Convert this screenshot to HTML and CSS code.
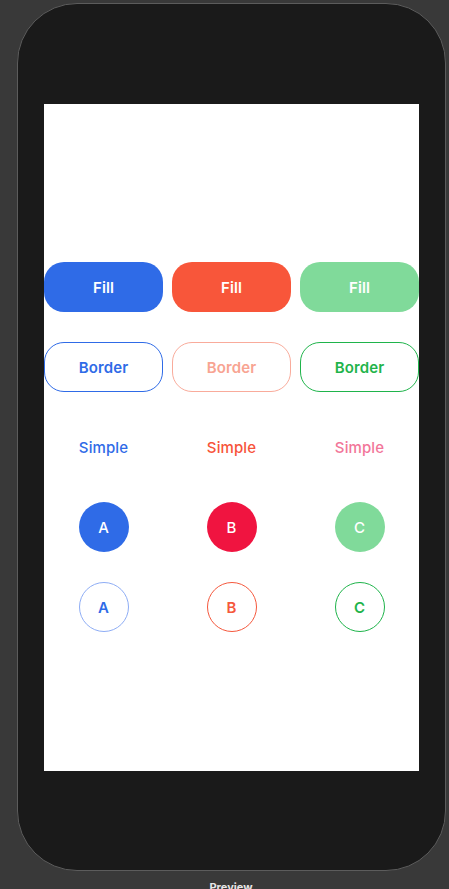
FILE: index.html
```html
<!DOCTYPE html>
<html>
<head>
<meta charset="utf-8">
<link rel="stylesheet" href="styles.css">
</head>
<body>
<div class="stage">
  <div class="phone">
    <div class="screen">
      <div class="grid">
        <div class="btn fill blue">Fill</div>
        <div class="btn fill red">Fill</div>
        <div class="btn fill green">Fill</div>

        <div class="btn border b-blue">Border</div>
        <div class="btn border b-salmon">Border</div>
        <div class="btn border b-green">Border</div>

        <div class="btn simple s-blue">Simple</div>
        <div class="btn simple s-red">Simple</div>
        <div class="btn simple s-pink">Simple</div>

        <div class="cell"><div class="circle c-blue">A</div></div>
        <div class="cell"><div class="circle c-crimson">B</div></div>
        <div class="cell"><div class="circle c-green">C</div></div>

        <div class="cell"><div class="circle o-blue">A</div></div>
        <div class="cell"><div class="circle o-red">B</div></div>
        <div class="cell"><div class="circle o-green">C</div></div>
      </div>
    </div>
  </div>
  <div class="label">Preview</div>
</div>
</body>
</html>
```
FILE: styles.css
```css
* { box-sizing: border-box; }
html, body {
  margin: 0;
  padding: 0;
  background: #393939;
  height: 889px;
  overflow: hidden;
}
.stage {
  padding: 3px 0 0 17px;
}
.phone {
  width: 429px;
  height: 868px;
  border: 1px solid #5c5c5c;
  border-radius: 60px;
  background: #1a1a1a;
  padding: 100px 0 0 26px;
}
.screen {
  width: 375px;
  height: 667px;
  background: #ffffff;
  padding-top: 158px;
}
.grid {
  display: grid;
  grid-template-columns: repeat(3, 119px);
  grid-auto-rows: 50px;
  column-gap: 9px;
  row-gap: 30px;
}
.btn {
  display: flex;
  align-items: center;
  justify-content: center;
  border-radius: 20px;
  font-family: Inter, "Noto Sans", sans-serif;
  font-weight: 600;
  font-size: 15px;
  letter-spacing: 0.1px;
}
.fill { color: #ffffff; }
.blue { background: #2f6be7; }
.red { background: #f8563a; }
.green { background: #80da9a; }
.border { background: #fff; border: 1px solid; }
.b-blue { border-color: #2f6be7; color: #2f6be7; }
.b-salmon { border-color: #f9ab9b; color: #f8a492; }
.b-green { border-color: #1fb44b; color: #1fb44b; }
.simple { font-weight: 500; font-size: 15px; }
.s-blue { color: #2f6be7; }
.s-red { color: #f7533a; }
.s-pink { color: #f27699; }
.cell {
  display: flex;
  align-items: center;
  justify-content: center;
}
.circle {
  width: 50px;
  height: 50px;
  border-radius: 50%;
  display: flex;
  align-items: center;
  justify-content: center;
  font-family: Inter, "Noto Sans", sans-serif;
  font-weight: 500;
  font-size: 15px;
}
.c-blue { background: #2f6be7; color: #fff; }
.c-crimson { background: #f01440; color: #fff; }
.c-green { background: #80da9a; color: #fff; }
.o-blue { border: 1px solid #8eadf5; color: #2f6be7; font-weight: 600; }
.o-red { border: 1px solid #f5583d; color: #f5583d; font-weight: 600; }
.o-green { border: 1px solid #1fb44b; color: #1fb44b; font-weight: 600; }
.label {
  width: 429px;
  text-align: center;
  padding-top: 9px;
  padding-right: 1px;
  font-family: Inter, "Noto Sans", sans-serif;
  font-weight: 700;
  font-size: 11px;
  color: #e6e6e6;
}
```
